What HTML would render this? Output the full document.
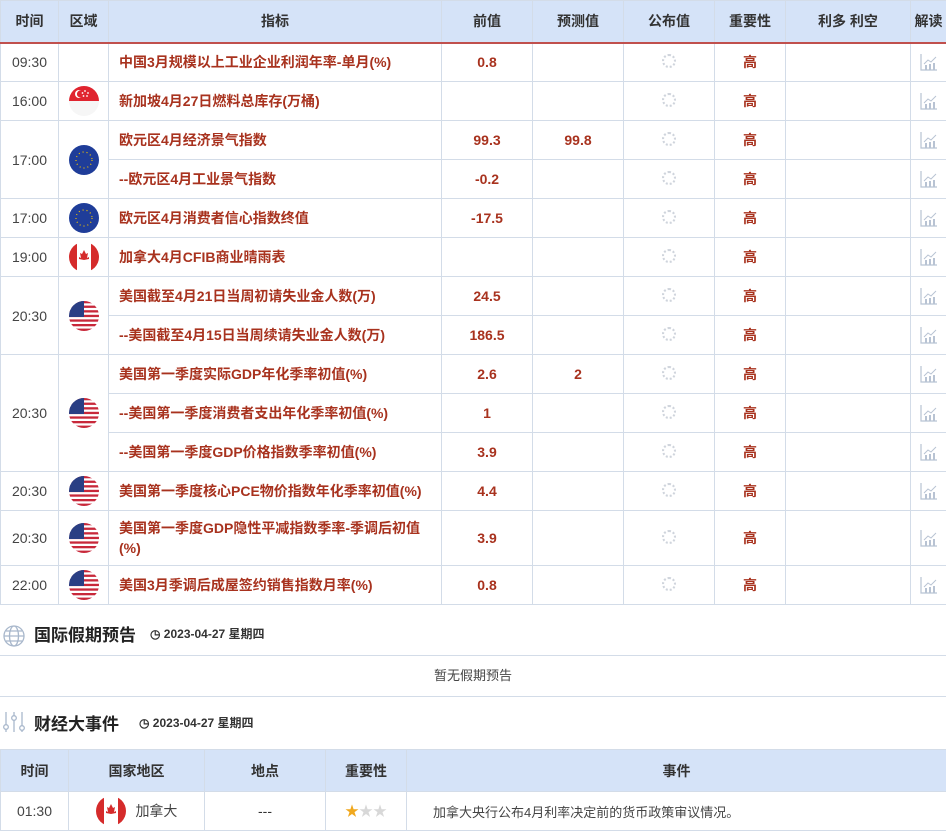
<!DOCTYPE html>
<html><head><meta charset="utf-8"><style>
*{margin:0;padding:0;box-sizing:border-box}
body{width:946px;height:831px;overflow:hidden;background:#fff;font-family:"Liberation Sans","Noto Sans CJK SC",sans-serif;font-size:14px;color:#333}
table{border-collapse:collapse;table-layout:fixed;width:946px}
td,th{border:1px solid #d3dce8;text-align:center;vertical-align:middle;padding:0}
th{background:#d5e3f8;font-weight:bold;color:#333;height:42px;border-bottom:2px solid #c0504d;font-size:14px}
td{height:39px}
td.n{text-align:left;padding-left:10px;color:#a8321e;font-weight:bold}
td.v{color:#a8321e;font-weight:bold}
td.h{color:#a8321e;font-weight:bold}
.t{color:#444}
svg.flag{display:block;margin:0 auto;width:30px;height:30px;border-radius:50%;overflow:hidden}
.ic{display:block;margin:0 auto}
.spin{display:inline-block;width:14px;height:14px;border-radius:50%;border:2px dotted #cfd4dc}
.sec{height:52px;position:relative;border-bottom:1px solid #d3dce8}
.sec .ti{position:absolute;left:34px;top:14px;font-size:17px;font-weight:bold;color:#222}
.sec .dt{position:absolute;top:18px;font-size:12px;font-weight:bold;color:#333}
</style></head><body>
<svg width="0" height="0" style="position:absolute"><defs>
<symbol id="us" viewBox="0 0 30 30"><rect width="30" height="30" fill="#fff"/><g fill="#c8283a"><rect y="0" width="30" height="2.3"/><rect y="4.6" width="30" height="2.3"/><rect y="9.2" width="30" height="2.3"/><rect y="13.8" width="30" height="2.3"/><rect y="18.4" width="30" height="2.3"/><rect y="23" width="30" height="2.3"/><rect y="27.6" width="30" height="2.4"/></g><rect width="15" height="16" fill="#2a3f84"/></symbol>
<symbol id="eu" viewBox="0 0 30 30"><rect width="30" height="30" fill="#1f3d99"/><circle cx="15" cy="15" r="8" fill="none" stroke="#f2c200" stroke-width="1.2" stroke-dasharray="1 3"/></symbol>
<symbol id="ca" viewBox="0 0 30 30"><rect width="30" height="30" fill="#fff"/><rect width="8" height="30" fill="#d52b2b"/><rect x="22" width="8" height="30" fill="#d52b2b"/><path d="M15 8l2 4 2-1-1 5 2-1 0 2-5 1v3h0v-3l-5-1 0-2 2 1-1-5 2 1z" fill="#d52b2b"/></symbol>
<symbol id="sg" viewBox="0 0 30 30"><rect width="30" height="30" fill="#f6f6f6"/><rect width="30" height="15" fill="#e0242f"/><circle cx="10" cy="8" r="4" fill="#fff"/><circle cx="11.5" cy="8" r="3.6" fill="#e0242f"/><g fill="#fff"><circle cx="16" cy="5" r=".9"/><circle cx="19" cy="7" r=".9"/><circle cx="18" cy="10" r=".9"/><circle cx="14.5" cy="10" r=".9"/><circle cx="13.5" cy="7" r=".9"/></g></symbol>
<symbol id="ch" viewBox="0 0 20 20"><path d="M2 2v16h16" fill="none" stroke="#b8c3d3" stroke-width="1.2"/><path d="M5 12l4-4 3 2 5-5" fill="none" stroke="#b8c3d3" stroke-width="1"/><rect x="6" y="13" width="2" height="5" fill="#b8c3d3"/><rect x="10" y="12" width="2" height="6" fill="#b8c3d3"/><rect x="14" y="11" width="2" height="7" fill="#b8c3d3"/></symbol>
</defs></svg>
<table>
<colgroup><col style="width:58px"><col style="width:50px"><col style="width:333px"><col style="width:91px"><col style="width:91px"><col style="width:91px"><col style="width:71px"><col style="width:125px"><col style="width:36px"></colgroup>
<tr><th>时间</th><th>区域</th><th>指标</th><th>前值</th><th>预测值</th><th>公布值</th><th>重要性</th><th>利多 利空</th><th>解读</th></tr>
<tr><td class="t">09:30</td><td></td><td class="n">中国3月规模以上工业企业利润年率-单月(%)</td><td class="v">0.8</td><td></td><td><span class="spin"></span></td><td class="h">高</td><td></td><td><svg class="ic" width="20" height="20"><use href="#ch"/></svg></td></tr>
<tr><td class="t">16:00</td><td><svg class="flag"><use href="#sg"/></svg></td><td class="n">新加坡4月27日燃料总库存(万桶)</td><td class="v"></td><td></td><td><span class="spin"></span></td><td class="h">高</td><td></td><td><svg class="ic" width="20" height="20"><use href="#ch"/></svg></td></tr>
<tr><td class="t" rowspan="2">17:00</td><td rowspan="2"><svg class="flag"><use href="#eu"/></svg></td><td class="n">欧元区4月经济景气指数</td><td class="v">99.3</td><td class="v">99.8</td><td><span class="spin"></span></td><td class="h">高</td><td></td><td><svg class="ic" width="20" height="20"><use href="#ch"/></svg></td></tr>
<tr><td class="n">--欧元区4月工业景气指数</td><td class="v">-0.2</td><td></td><td><span class="spin"></span></td><td class="h">高</td><td></td><td><svg class="ic" width="20" height="20"><use href="#ch"/></svg></td></tr>
<tr><td class="t">17:00</td><td><svg class="flag"><use href="#eu"/></svg></td><td class="n">欧元区4月消费者信心指数终值</td><td class="v">-17.5</td><td></td><td><span class="spin"></span></td><td class="h">高</td><td></td><td><svg class="ic" width="20" height="20"><use href="#ch"/></svg></td></tr>
<tr><td class="t">19:00</td><td><svg class="flag"><use href="#ca"/></svg></td><td class="n">加拿大4月CFIB商业晴雨表</td><td></td><td></td><td><span class="spin"></span></td><td class="h">高</td><td></td><td><svg class="ic" width="20" height="20"><use href="#ch"/></svg></td></tr>
<tr><td class="t" rowspan="2">20:30</td><td rowspan="2"><svg class="flag"><use href="#us"/></svg></td><td class="n">美国截至4月21日当周初请失业金人数(万)</td><td class="v">24.5</td><td></td><td><span class="spin"></span></td><td class="h">高</td><td></td><td><svg class="ic" width="20" height="20"><use href="#ch"/></svg></td></tr>
<tr><td class="n">--美国截至4月15日当周续请失业金人数(万)</td><td class="v">186.5</td><td></td><td><span class="spin"></span></td><td class="h">高</td><td></td><td><svg class="ic" width="20" height="20"><use href="#ch"/></svg></td></tr>
<tr><td class="t" rowspan="3">20:30</td><td rowspan="3"><svg class="flag"><use href="#us"/></svg></td><td class="n">美国第一季度实际GDP年化季率初值(%)</td><td class="v">2.6</td><td class="v">2</td><td><span class="spin"></span></td><td class="h">高</td><td></td><td><svg class="ic" width="20" height="20"><use href="#ch"/></svg></td></tr>
<tr><td class="n">--美国第一季度消费者支出年化季率初值(%)</td><td class="v">1</td><td></td><td><span class="spin"></span></td><td class="h">高</td><td></td><td><svg class="ic" width="20" height="20"><use href="#ch"/></svg></td></tr>
<tr><td class="n">--美国第一季度GDP价格指数季率初值(%)</td><td class="v">3.9</td><td></td><td><span class="spin"></span></td><td class="h">高</td><td></td><td><svg class="ic" width="20" height="20"><use href="#ch"/></svg></td></tr>
<tr><td class="t">20:30</td><td><svg class="flag"><use href="#us"/></svg></td><td class="n">美国第一季度核心PCE物价指数年化季率初值(%)</td><td class="v">4.4</td><td></td><td><span class="spin"></span></td><td class="h">高</td><td></td><td><svg class="ic" width="20" height="20"><use href="#ch"/></svg></td></tr>
<tr><td class="t" style="height:55px">20:30</td><td><svg class="flag"><use href="#us"/></svg></td><td class="n" style="line-height:20px">美国第一季度GDP隐性平减指数季率-季调后初值(%)</td><td class="v">3.9</td><td></td><td><span class="spin"></span></td><td class="h">高</td><td></td><td><svg class="ic" width="20" height="20"><use href="#ch"/></svg></td></tr>
<tr><td class="t">22:00</td><td><svg class="flag"><use href="#us"/></svg></td><td class="n">美国3月季调后成屋签约销售指数月率(%)</td><td class="v">0.8</td><td></td><td><span class="spin"></span></td><td class="h">高</td><td></td><td><svg class="ic" width="20" height="20"><use href="#ch"/></svg></td></tr>
</table>
<div class="sec" style="height:51px">
<svg style="position:absolute;left:3px;top:20px" width="22" height="22" viewBox="0 0 22 22" fill="none" stroke="#a9b8cc" stroke-width="1.3"><circle cx="11" cy="11" r="10"/><ellipse cx="11" cy="11" rx="4.5" ry="10"/><path d="M1 11h20M3 6h16M3 16h16"/></svg>
<div class="ti" style="top:16px">国际假期预告</div>
<div class="dt" style="left:150px;top:20px">◷ 2023-04-27 星期四</div>
</div>
<div style="height:41px;line-height:40px;text-align:center;font-size:13px;color:#444;border-bottom:1px solid #d3dce8">暂无假期预告</div>
<div class="sec" style="border-bottom:none">
<svg style="position:absolute;left:3px;top:14px" width="22" height="22" viewBox="0 0 22 22" fill="none" stroke="#a9b8cc" stroke-width="1.3"><path d="M3 1v20M11 1v20M19 1v20"/><circle cx="3" cy="16" r="2.3" fill="#fff"/><circle cx="11" cy="7" r="2.3" fill="#fff"/><circle cx="19" cy="17" r="2.3" fill="#fff"/></svg>
<div class="ti" style="top:13px">财经大事件</div>
<div class="dt" style="left:139px;top:17px">◷ 2023-04-27 星期四</div>
</div>
<table>
<colgroup><col style="width:68px"><col style="width:136px"><col style="width:121px"><col style="width:81px"><col style="width:540px"></colgroup>
<tr><th style="border-bottom:1px solid #d3dce8;height:42px">时间</th><th style="border-bottom:1px solid #d3dce8">国家地区</th><th style="border-bottom:1px solid #d3dce8">地点</th><th style="border-bottom:1px solid #d3dce8">重要性</th><th style="border-bottom:1px solid #d3dce8">事件</th></tr>
<tr><td class="t">01:30</td><td><svg style="width:30px;height:30px;border-radius:50%;vertical-align:middle"><use href="#ca"/></svg> <span style="color:#444;margin-left:6px;vertical-align:middle">加拿大</span></td><td>---</td><td><span style="color:#f0a81e">★</span><span style="color:#d8d8d8">★★</span></td><td style="text-align:left;padding-left:26px;font-size:13px;color:#444">加拿大央行公布4月利率决定前的货币政策审议情况。</td></tr>
</table>
</body></html>
